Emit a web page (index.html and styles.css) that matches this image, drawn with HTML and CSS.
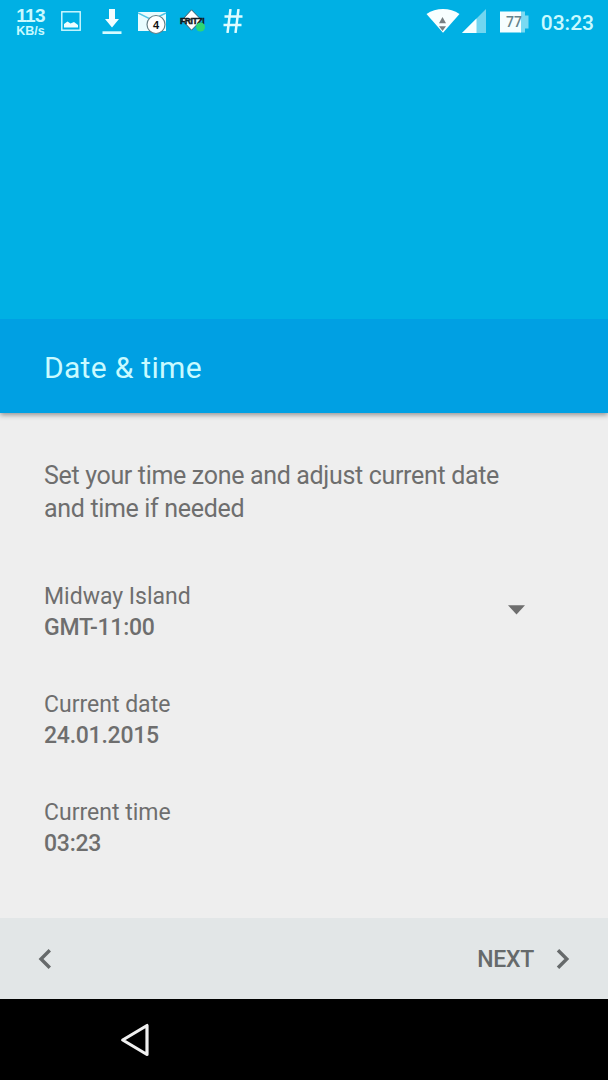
FILE: index.html
```html
<!DOCTYPE html>
<html lang="en">
<head>
<meta charset="utf-8">
<title>Date &amp; time</title>
<link rel="stylesheet" href="styles.css">
</head>
<body>
<div class="screen">
  <header class="hero">
    <div class="status">
      <div class="status-left">
        <div class="speed"><span class="speed-value">113</span><span class="speed-unit">KB/s</span></div>
        <svg class="ic-picture" width="20" height="20" viewBox="0 0 20 20"><rect x=".8" y=".8" width="18.4" height="18.4" fill="none" stroke="#d5fbff" stroke-width="1.4"/><path d="M3 16.500V13l3.500-2.500 3 2 3.500-1.500 4 3v2.500z" fill="#effeff"/></svg>
        <svg class="ic-download" width="20" height="26" viewBox="0 0 20 26"><path d="M7 0h6v10h4l-7 8.500L3 10h4z" fill="#f4feff"/><path d="M.5 22.300h19v2.700H.5z" fill="#d5fbff"/></svg>
        <svg class="ic-mail" width="30" height="26" viewBox="0 0 30 26"><path d="M0 3h28v19H0z" fill="#e9fcff"/><path d="M0 4l14 7 14-7" fill="none" stroke="#51c5e6" stroke-width="1.500"/><circle cx="18" cy="15.500" r="9" fill="#fff" stroke="#667f86" stroke-width="1.200"/><text class="badge-count" x="18" y="19.500" text-anchor="middle">4</text></svg>
        <svg class="ic-fritz" width="28" height="26" viewBox="0 0 28 26"><path d="M11.500.8l10 10.200-10 10.200L2 11z" fill="#fff" stroke="#355967" stroke-width="1"/><text class="fritz-label" x="0" y="14.500">FRITZ!</text><circle cx="20.500" cy="18" r="4.500" fill="#2fd673"/></svg>
        <svg class="ic-hash" width="20" height="24" viewBox="0 0 20 24"><path d="M7.500 0L4.500 24M15.500 0l-3 24M1.500 7.500h18M.5 16h18" fill="none" stroke="#dffcff" stroke-width="2.500"/></svg>
      </div>
      <div class="status-right">
        <svg class="ic-wifi" width="34" height="24" viewBox="0 0 34 24"><path d="M.5 5C10-1.600 24-1.600 33.500 5L17 23.800z" fill="#f8ffff"/><path d="M13 14.200l3.500-6.200 3.500 6.200zM13 17.200h7l-3.500 4.800z" fill="#777f82"/></svg>
        <svg class="ic-signal" width="24" height="24" viewBox="0 0 24 24"><path d="M24 0v24H0z" fill="#72d6f0"/><path d="M14.500 9.500V24H0z" fill="#f6ffff"/></svg>
        <svg class="ic-battery" width="29" height="22" viewBox="0 0 29 22"><path d="M20 .5h5v4h3.500v13H25v4h-5z" fill="#7adaf2"/><path d="M0 .5h21v21H0z" fill="#f6feff"/><text class="battery-label" x="14" y="15.500" text-anchor="middle">77</text></svg>
        <span class="clock">03:23</span>
      </div>
    </div>
    <h1 class="title">Date &amp; time</h1>
  </header>
  <main class="content">
    <p class="intro">Set your time zone and adjust current date<br>and time if needed</p>
    <section class="row zone">
      <div><div class="label">Midway Island</div><div class="value">GMT-11:00</div></div>
      <svg class="caret" width="17" height="10" viewBox="0 0 17 10"><path d="M0 .3h17L8.500 9.500z" fill="#6e6e6e"/></svg>
    </section>
    <section class="row"><div><div class="label">Current date</div><div class="value">24.01.2015</div></div></section>
    <section class="row"><div><div class="label">Current time</div><div class="value">03:23</div></div></section>
  </main>
  <footer class="actions">
    <svg width="14" height="20" viewBox="0 0 14 20"><path d="M11.800 1.200L3 10l8.800 8.800" fill="none" stroke="#666a6b" stroke-width="3.400"/></svg>
    <div class="next"><span class="next-label">NEXT</span><svg width="14" height="20" viewBox="0 0 14 20"><path d="M2 1.200L10.800 10 2 18.800" fill="none" stroke="#666a6b" stroke-width="3.400"/></svg></div>
  </footer>
  <nav class="navbar">
    <svg width="30" height="34" viewBox="0 0 30 34"><path d="M27 2.500v29L2.700 17z" fill="none" stroke="#f0f0f0" stroke-width="3.200" stroke-linejoin="round"/></svg>
  </nav>
</div>
</body>
</html>
```

FILE: styles.css
```css
* { box-sizing: border-box; }
body { margin: 0; font-family: Roboto, sans-serif; background: #eee; }
svg { display: block; flex: none; }
.screen { width: 608px; height: 1080px; display: flex; flex-direction: column; background: #eee; color: #6e6e6e; }
.hero { height: 413px; flex: none; display: flex; flex-direction: column; justify-content: space-between; background: #00b0e4; box-shadow: 0 2px 5px rgba(0,0,0,.38); }
.status { height: 44px; display: flex; justify-content: space-between; padding: 0 14px 0 15px; }
.status-left, .status-right { display: flex; align-items: flex-start; }
.speed { width: 31px; height: 40px; padding-top: 6px; display: flex; flex-direction: column; align-items: center; color: #c9faff; font-family: "Liberation Sans", sans-serif; font-weight: 700; }
.speed-value { font-size: 19px; line-height: 19px; letter-spacing: -.7px; }
.speed-unit { font-size: 12.500px; line-height: 13px; }
.ic-picture { margin: 11px 0 0 15px; }
.ic-download { margin: 9px 0 0 21px; }
.ic-mail { margin: 9px 0 0 16px; }
.ic-fritz { margin: 9px 0 0 12px; overflow: visible; }
.ic-hash { margin: 9px 0 0 15px; }
.badge-count { font: 700 11px "Liberation Sans", sans-serif; fill: #111; }
.fritz-label { font: 700 8.500px "Liberation Sans", sans-serif; letter-spacing: -.4px; fill: #101820; stroke: #101820; stroke-width: .5px; }
.ic-wifi { margin: 9px 0 0; }
.ic-signal { margin: 9px 0 0 2px; }
.ic-battery { margin: 11px 0 0 14px; }
.battery-label { font: 500 14px Roboto, sans-serif; fill: #64838c; }
.clock { margin: 10px 0 0 12px; font-size: 21px; line-height: 26px; font-weight: 500; color: #c9faff; }
.title { height: 94px; margin: 0; padding-left: 44px; background: #00a0e3; color: #c9faff; font-size: 30px; line-height: 97px; font-weight: 400; letter-spacing: .3px; }
.content { flex: 1; padding: 46px 44px 0; }
.intro { margin: 0 0 56px; font-size: 25px; line-height: 33px; letter-spacing: -.33px; white-space: nowrap; }
.row { display: flex; justify-content: space-between; height: 62px; margin-bottom: 46px; font-size: 23px; line-height: 31px; }
.zone { padding-right: 39px; }
.caret { margin-top: 24px; }
.value { font-weight: 500; letter-spacing: -.25px; }
.actions { height: 81px; flex: none; display: flex; align-items: center; justify-content: space-between; padding: 0 38px; background: #e2e6e7; color: #666a6b; }
.next { display: flex; align-items: center; gap: 22px; font-size: 23px; font-weight: 500; line-height: 32px; }
.next-label { padding-top: 2px; letter-spacing: -.3px; }
.navbar { height: 81px; flex: none; display: flex; align-items: center; padding-left: 120px; background: #000; }
```
